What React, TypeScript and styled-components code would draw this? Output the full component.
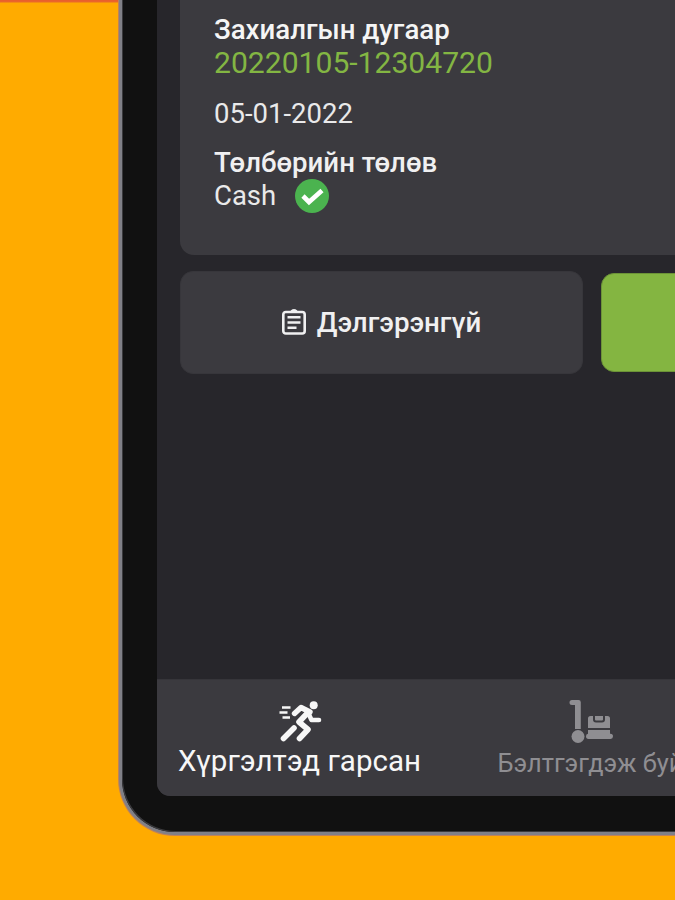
import React from "react";
import styled, { createGlobalStyle } from "styled-components";

const GlobalStyle = createGlobalStyle`
  * { box-sizing: border-box; }
  body { margin: 0; background: #ffab00; overflow: hidden; }
`;

const Page = styled.main`
  width: 675px;
  height: 900px;
  overflow: hidden;
  padding-left: 118px;
  background: linear-gradient(#e9602c 0 1px, #ea6a2a 2px, #ffab00 3px);
  font-family: Roboto, "Noto Sans", sans-serif;
  color: #f1f1f2;
`;

const Device = styled.div`
  width: 1000px;
  height: 836px;
  padding: 0 0 1px 1px;
  border-radius: 0 0 0 57px;
  background: #c0825a;
`;

const Rim = styled.div`
  height: 835px;
  padding: 0 0 3px 3px;
  border-radius: 0 0 0 56px;
  background: #808087;
`;

const Bezel = styled.div`
  height: 832px;
  padding: 0 0 36px 35px;
  border-radius: 0 0 0 53px;
  background: #111111;
  box-shadow: inset 1px -1px 0 #3a3a3d;
`;

const Screen = styled.div`
  height: 796px;
  display: flex;
  flex-direction: column;
  overflow: hidden;
  border-radius: 0 0 0 13px;
  background: #27262b;
`;

const Content = styled.section`
  flex: 1;
  padding-left: 23px;
`;

const OrderCard = styled.article`
  height: 255px;
  padding: 13px 0 0 34px;
  border-radius: 0 0 0 14px;
  background: #3b3a3f;
`;

const Field = styled.div<{ $gap?: number }>`
  margin-bottom: ${(p) => p.$gap ?? 0}px;
`;

const Line = styled.div<{ $size: number; $weight?: number; $color?: string }>`
  height: 33px;
  display: flex;
  align-items: center;
  line-height: 33px;
  white-space: nowrap;
  font-size: ${(p) => p.$size}px;
  font-weight: ${(p) => p.$weight ?? 400};
  color: ${(p) => p.$color ?? "#e9e9ea"};
`;

const PaidIcon = styled.svg`
  width: 34px;
  height: 34px;
  margin-left: 19px;
`;

const Actions = styled.div`
  display: flex;
  align-items: center;
  gap: 18px;
  margin-top: 16px;
`;

const DetailButton = styled.button`
  width: 403px;
  height: 103px;
  padding: 0;
  display: flex;
  align-items: center;
  justify-content: center;
  gap: 11px;
  border: 1px solid #37363b;
  border-radius: 13px;
  background: #3b3a3f;
  color: #f0f0f1;
  font: 500 27.7px/33px Roboto, "Noto Sans", sans-serif;
`;

const ConfirmButton = styled.button`
  width: 403px;
  height: 99px;
  border: 1px solid #6c9337;
  border-radius: 13px;
  background: #84b541;
`;

const ClipboardIcon = styled.svg`
  width: 24px;
  height: 27px;
  margin-top: -3px;
`;

const NavBar = styled.nav`
  height: 117px;
  display: flex;
  border-top: 1px solid #36353a;
  background: #3b3a3f;
`;

const NavItem = styled.div<{ $width: number; $active?: boolean }>`
  width: ${(p) => p.$width}px;
  padding-top: 18px;
  display: flex;
  flex: none;
  flex-direction: column;
  align-items: center;
  color: ${(p) => (p.$active ? "#f7f7f7" : "#8f8e92")};
`;

const NavIcon = styled.svg`
  width: 46px;
  height: 46px;
  flex: none;
`;

const NavLabel = styled.span<{ $size: number; $line: number }>`
  line-height: ${(p) => p.$line}px;
  font-size: ${(p) => p.$size}px;
  white-space: nowrap;
`;

export default function App() {
  return (
    <>
      <GlobalStyle />
      <Page>
        <Device>
          <Rim>
            <Bezel>
              <Screen>
                <Content>
                  <OrderCard>
                    <Field $gap={18}>
                      <Line $size={27.6} $weight={500} $color="#f5f5f5">Захиалгын дугаар</Line>
                      <Line $size={30.1} $color="#83b643">20220105-12304720</Line>
                    </Field>
                    <Field $gap={16}>
                      <Line $size={27.5}>05-01-2022</Line>
                    </Field>
                    <Field>
                      <Line $size={27.6} $weight={500} $color="#f0f0f1">Төлбөрийн төлөв</Line>
                      <Line $size={27.5}>
                        Cash
                        <PaidIcon viewBox="0 0 34 34">
                          <circle cx="17" cy="17" r="17" fill="#4bb34f" />
                          <path d="M8 17 14 23 27 11.500" fill="none" stroke="#fff" strokeWidth="4.6" />
                        </PaidIcon>
                      </Line>
                    </Field>
                  </OrderCard>
                  <Actions>
                    <DetailButton>
                      <ClipboardIcon viewBox="0 0 24 27" fill="none" stroke="currentColor">
                        <rect x="1.300" y="4" width="21.400" height="21.500" rx="2.500" strokeWidth="2.600" />
                        <path d="M8.500 3.500a3.600 2.500 0 0 1 7 0z" fill="currentColor" />
                        <path d="M5.500 9.300h13M5.500 14.500h13M5.500 19.700h9" strokeWidth="2.400" />
                      </ClipboardIcon>
                      Дэлгэрэнгүй
                    </DetailButton>
                    <ConfirmButton />
                  </Actions>
                </Content>
                <NavBar>
                  <NavItem $width={285} $active>
                    <NavIcon viewBox="0 0 46 46" fill="none" stroke="currentColor" strokeLinecap="round" strokeLinejoin="round">
                      <circle cx="36.700" cy="7.200" r="4" fill="currentColor" stroke="none" />
                      <path d="M5 9.500h8.500M2.500 14.500h8M5.500 19.500h7.500" strokeWidth="2.600" strokeLinecap="butt" />
                      <path d="M17.500 15.500 24 9.500 33 14" strokeWidth="5.400" />
                      <path d="M30.500 15 22 24 31 31.500 22.500 40.500" strokeWidth="5.600" />
                      <path d="M31 14.500 34.500 22H42" strokeWidth="4.600" />
                      <path d="M17 30 6.500 40.500" strokeWidth="5.600" />
                    </NavIcon>
                    <NavLabel $size={29.5} $line={35}>Хүргэлтэд гарсан</NavLabel>
                  </NavItem>
                  <NavItem $width={297}>
                    <NavIcon viewBox="0 0 46 46" fill="currentColor">
                      <path d="M4 2h6.500a2.300 2.300 0 0 1 2.300 2.300V31H7V7H4a2.500 2.500 0 0 1 0-5z" />
                      <circle cx="10" cy="38.500" r="6.500" />
                      <path d="M20 20.500q0-2.500 2.500-2.500H25v3.500q0 3 3 3h6q3 0 3-3V18h2.500q2.500 0 2.500 2.500V30H20z" />
                      <path d="M27 18h8v3.500q0 1-1 1h-6q-1 0-1-1zM20 32h22v3.700h.500q2.500 0 2.500 2.500T42.500 41H20.500q-2.500 0-2.500-2.700 0-2.300 2-2.600z" />
                    </NavIcon>
                    <NavLabel $size={25.4} $line={38}>Бэлтгэгдэж буй</NavLabel>
                  </NavItem>
                </NavBar>
              </Screen>
            </Bezel>
          </Rim>
        </Device>
      </Page>
    </>
  );
}
